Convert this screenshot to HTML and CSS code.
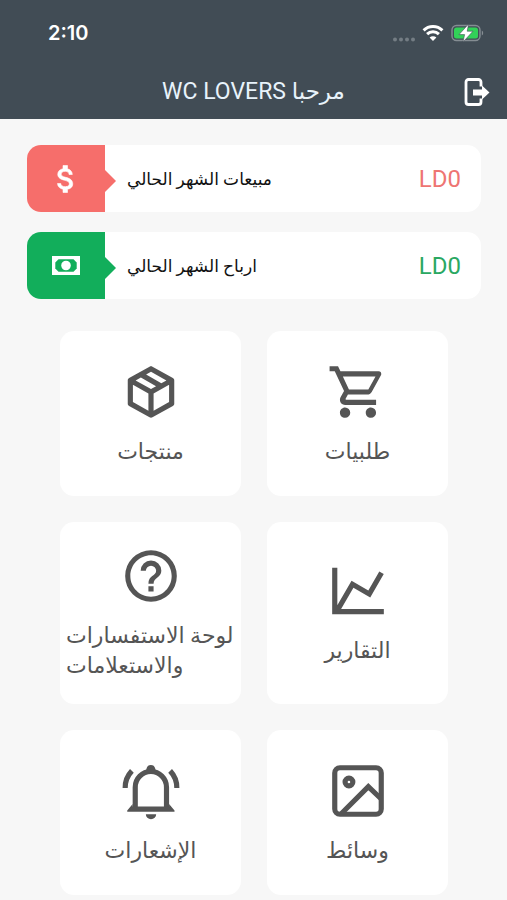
FILE: index.html
```
<!DOCTYPE html>
<html lang="ar">
<head>
    <meta charset="UTF-8">
    <meta name="viewport" content="width=device-width, initial-scale=1.0">
    <title>WC LOVERS</title>
    <link rel="stylesheet" href="styles.css">
</head>
<body>

<header class="header">
    <div class="status-bar">
        <span class="time">2:10</span>
        <div class="status-icons">
            <svg class="signal" viewBox="0 0 22 5" width="22" height="5" aria-hidden="true">
                <circle cx="2" cy="2.5" r="2"/><circle cx="8" cy="2.5" r="2"/><circle cx="14" cy="2.5" r="2"/><circle cx="20" cy="2.5" r="2"/>
            </svg>
            <svg class="wifi" viewBox="0 0 22 16" width="22" height="16" aria-hidden="true">
                <path d="M1.6 5.4a13.4 13.4 0 0 1 18.8 0M5.1 9.1a8.4 8.4 0 0 1 11.8 0" fill="none" stroke="#fff" stroke-width="3"/>
                <path d="M11 16l-3.4-3.5a4.9 4.9 0 0 1 6.8 0z" fill="#fff"/>
            </svg>
            <svg class="battery" viewBox="0 0 33 18" width="33" height="18" aria-hidden="true">
                <rect x="1" y="1.5" width="28" height="15" rx="4.5" fill="none" stroke="#858d93" stroke-width="1.4"/>
                <path d="M30.8 6.5v5c1.8-.8 1.8-4.2 0-5z" fill="#858d93"/>
                <rect x="3" y="3.5" width="24" height="11" rx="2.5" fill="#32d158"/>
                <path d="M17.6 0L8 10.6h5.6L12 18l10-10.8h-5.8z" fill="#fff" stroke="#414c55" stroke-width=".6"/>
            </svg>
        </div>
    </div>
    <div class="title-bar">
        <h1 dir="rtl">مرحبا WC LOVERS</h1>
        <button class="logout" type="button" aria-label="خروج">
            <svg viewBox="0 0 26 28" width="26" height="28" aria-hidden="true">
                <path d="M17 8.500V4a2.500 2.500 0 0 0-2.500-2.500h-10A2.500 2.500 0 0 0 2 4v20a2.500 2.500 0 0 0 2.500 2.500h10A2.500 2.500 0 0 0 17 24v-3.500" fill="none" stroke="#fff" stroke-width="2.800"/>
                <path d="M9 11.500h9V7.500l7.500 7-7.500 7v-4H9z" fill="#fff"/>
            </svg>
        </button>
    </div>
</header>

<main class="content">
    <section class="summary">
        <div class="card">
            <div class="card-icon sales">
                <svg viewBox="0 0 24 24" width="36" height="36" fill="#fff" stroke="#fff" stroke-width=".4" aria-hidden="true">
                    <path d="M11.8 10.9c-2.27-.59-3-1.2-3-2.15 0-1.09 1.01-1.85 2.7-1.85 1.78 0 2.44.85 2.5 2.1h2.21c-.07-1.72-1.12-3.3-3.21-3.81V3h-3v2.16c-1.94.42-3.5 1.68-3.5 3.61 0 2.31 1.91 3.46 4.7 4.13 2.5.6 3 1.48 3 2.41 0 .69-.49 1.79-2.7 1.79-2.06 0-2.87-.92-2.98-2.1h-2.2c.12 2.19 1.76 3.42 3.68 3.83V21h3v-2.15c1.95-.37 3.5-1.5 3.5-3.55 0-2.84-2.43-3.81-4.7-4.4z"/>
                </svg>
            </div>
            <p class="card-label" dir="rtl">مبيعات الشهر الحالي</p>
            <span class="amount sales-amount">LD0</span>
        </div>
        <div class="card">
            <div class="card-icon earnings">
                <svg viewBox="0 0 28 19" width="28" height="19" aria-hidden="true">
                    <path d="M0 0h28v19H0z" fill="#fff"/>
                    <path d="M6.500 3.200h15l3.200 3.200v6.200l-3.200 3.200h-15l-3.200-3.200V6.400z" fill="#12ae5b"/>
                    <circle cx="14" cy="9.5" r="4.8" fill="#fff"/>
                </svg>
            </div>
            <p class="card-label" dir="rtl">ارباح الشهر الحالي</p>
            <span class="amount earnings-amount">LD0</span>
        </div>
    </section>

    <nav class="tiles">
        <a class="tile" href="#">
            <svg class="tile-icon" viewBox="0 0 24 24" aria-hidden="true">
                <path d="M21,16.5C21,16.88 20.79,17.21 20.47,17.38L12.57,21.82C12.41,21.94 12.21,22 12,22C11.79,22 11.59,21.94 11.43,21.82L3.53,17.38C3.21,17.21 3,16.88 3,16.5V7.5C3,7.12 3.21,6.79 3.53,6.62L11.43,2.18C11.59,2.06 11.79,2 12,2C12.21,2 12.41,2.06 12.57,2.18L20.47,6.62C20.79,6.79 21,7.12 21,7.5V16.5M12,4.15L10.11,5.22L16,8.61L17.96,7.5L12,4.15M6.04,7.5L12,10.85L13.96,9.75L8.08,6.35L6.04,7.5M5,15.91L11,19.29V12.58L5,9.21V15.91M19,15.91V9.21L13,12.58V19.29L19,15.91Z"/>
            </svg>
            <span class="tile-label" dir="rtl">منتجات</span>
        </a>
        <a class="tile" href="#">
            <svg class="tile-icon" viewBox="0 0 24 24" aria-hidden="true">
                <path d="M17,18A2,2 0 0,1 19,20A2,2 0 0,1 17,22C15.89,22 15,21.1 15,20C15,18.89 15.89,18 17,18M1,2H4.27L5.21,4H20A1,1 0 0,1 21,5C21,5.17 20.95,5.34 20.88,5.5L17.3,11.97C16.96,12.58 16.3,13 15.55,13H8.1L7.2,14.63L7.17,14.75A0.25,0.25 0 0,0 7.42,15H19V17H7C5.89,17 5,16.1 5,15C5,14.65 5.09,14.32 5.24,14.04L6.6,11.59L3,4H1V2M7,18A2,2 0 0,1 9,20A2,2 0 0,1 7,22C5.89,22 5,21.1 5,20C5,18.89 5.89,18 7,18M16,11L18.78,6H6.14L8.5,11H16Z"/>
            </svg>
            <span class="tile-label" dir="rtl">طلبيات</span>
        </a>
        <a class="tile" href="#">
            <svg class="tile-icon" viewBox="0 0 24 24" aria-hidden="true">
                <path d="M11,18H13V16H11V18M12,2A10,10 0 0,0 2,12A10,10 0 0,0 12,22A10,10 0 0,0 22,12A10,10 0 0,0 12,2M12,20C7.59,20 4,16.41 4,12C4,7.59 7.59,4 12,4C16.41,4 20,7.59 20,12C20,16.41 16.41,20 12,20M12,6A4,4 0 0,0 8,10H10A2,2 0 0,1 12,8A2,2 0 0,1 14,10C14,12 11,11.75 11,15H13C13,12.75 16,12.5 16,10A4,4 0 0,0 12,6Z"/>
            </svg>
            <span class="tile-label" dir="rtl">لوحة الاستفسارات والاستعلامات</span>
        </a>
        <a class="tile" href="#">
            <svg class="tile-icon" viewBox="0 0 24 24" aria-hidden="true">
                <path d="M16,11.78L20.24,4.45L21.97,5.45L16.74,14.5L10.23,10.75L5.46,19H22V21H2V3H4V17.54L9.5,8L16,11.78Z"/>
            </svg>
            <span class="tile-label" dir="rtl">التقارير</span>
        </a>
        <a class="tile" href="#">
            <svg class="tile-icon" viewBox="0 0 24 24" aria-hidden="true">
                <path d="M5.9 18.500V10.500a6 6 0 0 1 12.100 0v8M2 10.800a9.500 9.500 0 0 1 2.600-6.600M22 10.800a9.500 9.500 0 0 0-2.600-6.600" fill="none" stroke="#555" stroke-width="2"/>
                <path d="M2.800 20v-.5l2.100-2.500v1h14.100v-1l2.100 2.500v.5zM9.900 4.800l.4-1.600a1.700 1.700 0 0 1 3.300 0l.4 1.600zM10 21h4a2 1.900 0 0 1-4 0z"/>
            </svg>
            <span class="tile-label" dir="rtl">الإشعارات</span>
        </a>
        <a class="tile" href="#">
            <svg class="tile-icon" viewBox="0 0 24 24" aria-hidden="true">
                <g fill="none" stroke="#555" stroke-width="2">
                    <rect x="3" y="3" width="18" height="18" rx="2"/>
                    <circle cx="8.5" cy="8.5" r="1.5"/>
                    <path d="M5.600 20.700L16 10.300l4.900 4.700"/>
                </g>
            </svg>
            <span class="tile-label" dir="rtl">وسائط</span>
        </a>
    </nav>
</main>

</body>
</html>
```
FILE: styles.css
```
* {
    box-sizing: border-box;
}
body {
    margin: 0;
    background-color: #f7f7f7;
    font-family: Roboto, "DejaVu Sans", sans-serif;
}
h1, p {
    margin: 0;
    font-weight: 400;
}
.header {
    background-color: #414c55;
    color: #fff;
}
.status-bar {
    display: flex;
    justify-content: space-between;
    align-items: center;
    height: 64px;
    padding: 2px 23px 0 48px;
}
.time {
    font-family: Inter, sans-serif;
    font-size: 20px;
    font-weight: 600;
}
.status-icons {
    display: flex;
    align-items: center;
    gap: 7px;
}
.signal {
    align-self: flex-end;
    fill: #747d84;
}
.title-bar {
    display: grid;
    grid-template-columns: 1fr auto 1fr;
    align-items: center;
    height: 55px;
    padding: 0 17px;
}
.title-bar h1 {
    grid-column: 2;
    font-size: 23px;
    color: #e8f3fb;
}
.logout {
    justify-self: end;
    display: flex;
    padding: 0;
    border: 0;
    background: none;
    cursor: pointer;
}
.content {
    padding: 26px 26px 26px 27px;
}
.summary {
    display: grid;
    gap: 20px;
    margin-bottom: 32px;
}
.card {
    display: flex;
    align-items: center;
    height: 67px;
    padding-right: 20px;
    background-color: #fff;
    border-radius: 14px;
}
.card-icon {
    position: relative;
    display: flex;
    align-items: center;
    justify-content: center;
    width: 78px;
    height: 100%;
    border-radius: 14px 0 0 14px;
}
/* pointer on the right edge */
.card-icon::after {
    content: "";
    position: absolute;
    left: 100%;
    top: 25px;
    border: 11px solid transparent;
    border-right-width: 0;
}
.sales {
    background-color: #f66e6b;
}
.sales::after {
    border-left-color: #f66e6b;
}
.earnings {
    background-color: #12ae5b;
}
.earnings::after {
    border-left-color: #12ae5b;
}
.card-label {
    flex: 1;
    padding-left: 22px;
    font-size: 17px;
    text-align: left;
    color: #111;
}
.amount {
    font-size: 24px;
}
.sales-amount {
    color: #ee7572;
}
.earnings-amount {
    color: #2aa862;
}
.tiles {
    display: grid;
    grid-template-columns: 1fr 1fr;
    gap: 26px;
    padding: 0 33px;
}
.tile {
    display: flex;
    flex-direction: column;
    align-items: center;
    justify-content: center;
    gap: 14px;
    min-height: 165px;
    padding: 23px 6px;
    background-color: #fff;
    border-radius: 14px;
    color: #555;
    text-decoration: none;
}
.tile-icon {
    width: 62px;
    height: 62px;
    fill: #555;
}
.tile-label {
    font-size: 22px;
    line-height: 30px;
    text-align: left;
}
```
